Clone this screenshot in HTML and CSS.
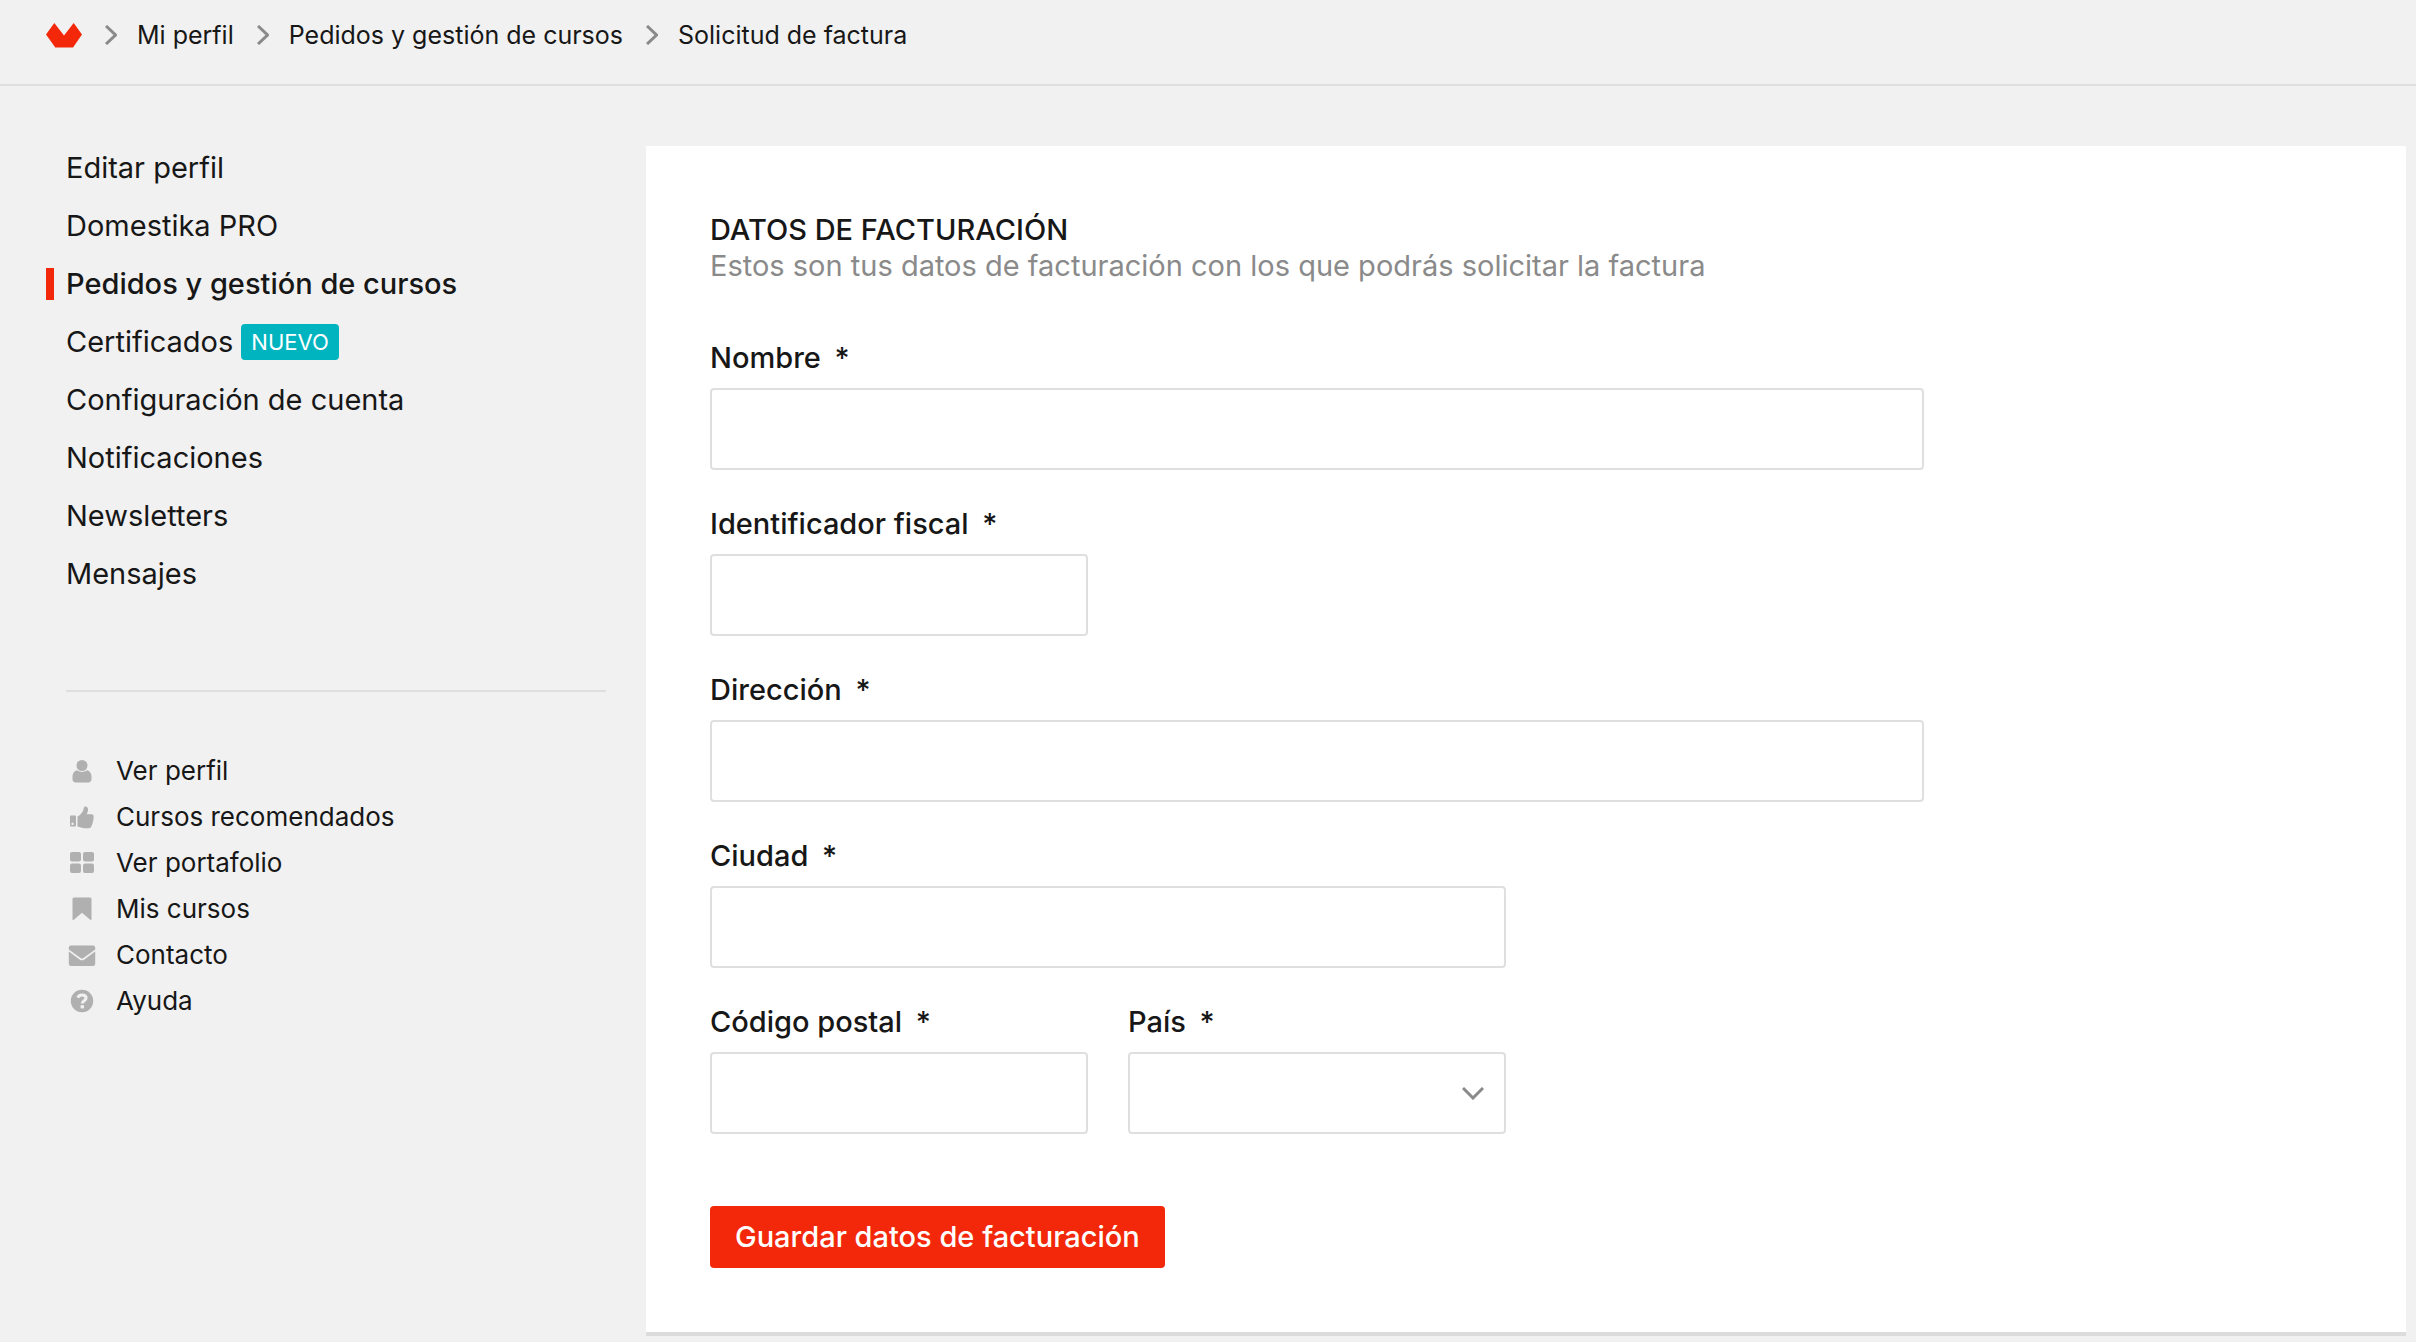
FILE: index.html
```html
<!DOCTYPE html>
<html lang="es">
<head>
  <meta charset="utf-8">
  <meta name="viewport" content="width=device-width, initial-scale=1">
  <title>Solicitud de factura</title>
  <link rel="stylesheet" href="styles.css">
</head>
<body>
  <header class="topbar">
    <nav aria-label="Ruta de navegación">
      <ol class="breadcrumb">
        <li>
          <a class="logo" href="#" aria-label="Domestika">
            <svg viewBox="0 0 36 25" width="36" height="25"><path fill="#f3280a" d="M0 11.5 8.3 0 18 12.5 27.7 0 36 11.5 27 24.5H9.3z"/></svg>
          </a>
        </li>
        <li>
          <svg class="sep" viewBox="0 0 12 20" width="12" height="20"><path d="M1 1l9.500 9L1 19"/></svg>
          <a href="#">Mi perfil</a>
        </li>
        <li>
          <svg class="sep" viewBox="0 0 12 20" width="12" height="20"><path d="M1 1l9.500 9L1 19"/></svg>
          <a href="#">Pedidos y gestión de cursos</a>
        </li>
        <li>
          <svg class="sep" viewBox="0 0 12 20" width="12" height="20"><path d="M1 1l9.500 9L1 19"/></svg>
          <a href="#" aria-current="page">Solicitud de factura</a>
        </li>
      </ol>
    </nav>
  </header>

  <div class="layout">
    <aside class="sidebar">
      <ul class="menu">
        <li><a href="#">Editar perfil</a></li>
        <li><a href="#">Domestika PRO</a></li>
        <li class="active"><a href="#" aria-current="true">Pedidos y gestión de cursos</a></li>
        <li><a href="#">Certificados</a><span class="badge">NUEVO</span></li>
        <li><a href="#">Configuración de cuenta</a></li>
        <li><a href="#">Notificaciones</a></li>
        <li><a href="#">Newsletters</a></li>
        <li><a href="#">Mensajes</a></li>
      </ul>
      <ul class="shortcuts">
        <li><a href="#">
          <svg viewBox="0 0 28 24" width="28" height="24"><circle cx="14" cy="6.500" r="5.500"/><path d="M9 11.300c3 2.200 7 2.200 10 0 2.800.7 4.500 3 4.500 6.200v2.500c0 2.200-1.300 3.500-3.300 3.500H7.800c-2 0-3.300-1.300-3.300-3.500v-2.500c0-3.200 1.700-5.500 4.500-6.200z"/></svg>
          Ver perfil</a></li>
        <li><a href="#">
          <svg viewBox="0 0 28 24" width="28" height="24"><path fill-rule="evenodd" d="M3 10.500h4q1 0 1 1V20.500q0 1-1 1H3q-1 0-1-1V11.500q0-1 1-1zM4.500 17.600a1.200 1.200 0 1 0 .01 0z"/><path d="M9.500 11.500c2.500-1 4.500-3.500 5.700-6 .4-1 .4-2.500 1-3.500.5-1 3-.8 3.600 1 .7 2-.3 4.300-1 6.200h4.500c1.500 0 2.500.8 2.400 2.500 0 1.500-.3 2.500-.5 4-.3 1.500-.7 3-1.300 4.500-.6 1.800-1.400 3-3.400 3h-4c-2.500 0-4.500-1.400-7-1.700z"/></svg>
          Cursos recomendados</a></li>
        <li><a href="#">
          <svg viewBox="0 0 28 24" width="28" height="24"><rect x="2" y="1" width="11" height="9.500" rx="2"/><rect x="15" y="1" width="11" height="9.500" rx="2"/><rect x="2" y="12.500" width="11" height="9.500" rx="2"/><rect x="15" y="12.500" width="11" height="9.500" rx="2"/></svg>
          Ver portafolio</a></li>
        <li><a href="#">
          <svg viewBox="0 0 28 24" width="28" height="24"><path d="M6 .5h16q1.500 0 1.500 1.500v20q0 1.500-1.300.7L14 15.800l-8.200 6.900q-1.300.8-1.300-.7V2Q4.500.5 6 .5z"/></svg>
          Mis cursos</a></li>
        <li><a href="#">
          <svg viewBox="0 0 28 24" width="28" height="24"><path d="M3 2.500h22q2.200 0 2.200 2.200v1.800L15.500 14.900q-1.500 1.100-3 0L.8 6.500V4.700Q.8 2.500 3 2.500z"/><path d="M.8 8.500l10.800 7.900q2.400 1.700 4.800 0l10.800-7.900v12.300q0 2.200-2.200 2.200H3Q.8 23 .8 20.800z"/></svg>
          Contacto</a></li>
        <li><a href="#">
          <svg viewBox="0 0 28 24" width="28" height="24"><circle cx="14" cy="12" r="11.200"/><path fill="none" stroke="#f1f1f1" stroke-width="3" d="M9.800 8.700c.8-1.800 2.300-2.600 4.300-2.600 2.300 0 4 1.200 4 3 0 2.600-3.800 2.700-3.800 5.400"/><rect x="12.600" y="16.200" width="3.400" height="3.200" style="fill:#f1f1f1"/></svg>
          Ayuda</a></li>
      </ul>
    </aside>

    <main class="card">
      <h1>DATOS DE FACTURACIÓN</h1>
      <p class="intro">Estos son tus datos de facturación con los que podrás solicitar la factura</p>
      <form>
        <div class="fields">
          <div class="field span-3">
            <label for="nombre">Nombre <abbr>*</abbr></label>
            <input id="nombre" type="text" required>
          </div>
          <div class="field">
            <label for="fiscal">Identificador fiscal <abbr>*</abbr></label>
            <input id="fiscal" type="text" required>
          </div>
          <div class="field span-3">
            <label for="direccion">Dirección <abbr>*</abbr></label>
            <input id="direccion" type="text" required>
          </div>
          <div class="field span-2">
            <label for="ciudad">Ciudad <abbr>*</abbr></label>
            <input id="ciudad" type="text" required>
          </div>
          <div class="field">
            <label for="postal">Código postal <abbr>*</abbr></label>
            <input id="postal" type="text" required>
          </div>
          <div class="field">
            <label for="pais">País <abbr>*</abbr></label>
            <select id="pais" required>
              <option value=""></option>
            </select>
          </div>
        </div>
        <button class="save" type="submit">Guardar datos de facturación</button>
      </form>
    </main>
  </div>
</body>
</html>
```

FILE: styles.css
```css
*,
*::before,
*::after {
  box-sizing: border-box;
}

body {
  margin: 0;
  background: #f1f1f1;
  color: #171717;
  font-family: Inter, "Liberation Sans", sans-serif;
  font-size: 29px;
  line-height: 36px;
}

a {
  color: inherit;
  text-decoration: none;
}

ul,
ol {
  list-style: none;
  margin: 0;
  padding: 0;
}

/* Breadcrumb */
.topbar {
  padding: 17px 46px 31px;
  border-bottom: 2px solid #dfdfdf;
}

.breadcrumb {
  display: flex;
  flex-wrap: wrap;
  gap: 23px;
  font-size: 25px;
}

.breadcrumb li {
  display: flex;
  align-items: center;
  gap: 20px;
  min-height: 36px;
}

.logo {
  display: flex;
}

.sep {
  fill: none;
  stroke: #8a8a8a;
  stroke-width: 3px;
}

/* Two-part page */
.layout {
  display: grid;
  grid-template-columns: repeat(4, 1fr);
  gap: 40px;
  align-items: start;
  padding: 60px 10px 6px 46px;
}

.sidebar {
  padding-left: 20px;
}

.menu {
  display: grid;
  gap: 22px;
  padding: 4px 0 98px;
  border-bottom: 2px solid #dfdfdf;
}

.menu li {
  display: flex;
  align-items: center;
  gap: 8px;
}

.menu .active {
  margin-left: -20px;
  gap: 12px;
  font-weight: 500;
}

.menu .active::before {
  content: "";
  width: 8px;
  height: 32px;
  background: #f3280a;
}

.badge {
  padding: 0 10px;
  border-radius: 4px;
  background: #00b4bf;
  color: #fff;
  font-size: 22px;
  line-height: 36px;
}

.shortcuts {
  display: grid;
  gap: 10px;
  padding: 61px 0 0 2px;
  font-size: 26px;
}

.shortcuts a {
  display: flex;
  align-items: center;
  gap: 20px;
}

.shortcuts svg {
  fill: #b0b0b0;
}

/* Billing form */
.card {
  grid-column: span 3;
  padding: 66px 64px 64px;
  background: #fff;
  box-shadow: 0 4px 0 #dcdcdc;
}

h1 {
  margin: 0;
  font-size: 29px;
  font-weight: 500;
}

.intro {
  margin: 0 0 56px;
  color: #8a8a8a;
}

.fields {
  display: grid;
  grid-template-columns: repeat(4, 1fr);
  gap: 36px 40px;
}

.field {
  display: grid;
  gap: 12px;
  grid-column-start: 1;
}

.field + .field:last-child {
  grid-column-start: 2;
}

.span-2 {
  grid-column-end: span 2;
}

.span-3 {
  grid-column-end: span 3;
}

label {
  font-weight: 500;
}

label abbr {
  margin-left: 6px;
}

input,
select {
  width: 100%;
  height: 82px;
  padding: 0 20px;
  border: 2px solid #dfdfdf;
  border-radius: 4px;
  background-color: #fff;
  color: inherit;
  font: inherit;
}

select {
  appearance: none;
  background-image: url("data:image/svg+xml,%3Csvg xmlns='http://www.w3.org/2000/svg' viewBox='0 0 22 13' width='22' height='13'%3E%3Cpath d='M1 1l10 10L21 1' fill='none' stroke='%238a8a8a' stroke-width='3'/%3E%3C/svg%3E");
  background-repeat: no-repeat;
  background-position: right 20px center;
}

.save {
  display: block;
  margin-top: 72px;
  padding: 13px 25px;
  border: 0;
  border-radius: 4px;
  background: #f3280a;
  color: #fff;
  font: inherit;
  font-weight: 500;
}
```
